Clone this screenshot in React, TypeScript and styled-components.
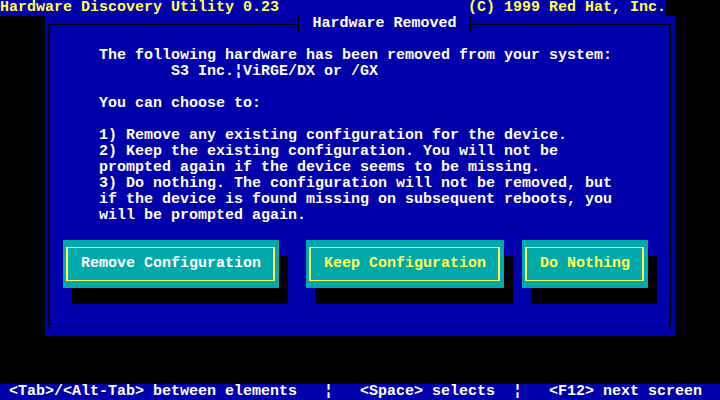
import React from "react";
import styled, { createGlobalStyle } from "styled-components";

const BLUE = "#0000aa";
const CYAN = "#00aaaa";
const YELLOW = "#ffff55";
const WHITE = "#ffffff";
const CELL = 9;

const Global = createGlobalStyle`
html, body {
    margin: 0;
    padding: 0;
    background: #000;
    overflow: hidden;
}
body {
    font-family: "Liberation Mono", "DejaVu Sans Mono", monospace;
    font-weight: 700;
    font-size: 15px;
    line-height: 16px;
}
`;

const buttons = [
    { label: "Remove Configuration", color: WHITE, gap: 0 },
    { label: "Keep Configuration", color: YELLOW, gap: 27 },
    { label: "Do Nothing", color: YELLOW, gap: 18 },
];

const lines = [
    "1) Remove any existing configuration for the device.",
    "2) Keep the existing configuration. You will not be",
    "prompted again if the device seems to be missing.",
    "3) Do nothing. The configuration will not be removed, but",
    "if the device is found missing on subsequent reboots, you",
    "will be prompted again.",
];

const App = () => {
    return (
        <Screen>
            <Global />
            <TopBar>
                <span>Hardware Discovery Utility 0.23</span>
                <span>(C) 1999 Red Hat, Inc.</span>
            </TopBar>
            <Window>
                <Frame>
                    <Title>Hardware Removed</Title>
                    <Para>
                        The following hardware has been removed from your system:
                        {"\n"}
                        {"        S3 Inc.¦ViRGE/DX or /GX"}
                    </Para>
                    <Para>You can choose to:</Para>
                    <Para>{lines.join("\n")}</Para>
                    <ButtonRow>
                        {buttons.map((b) => (
                            <Button key={b.label} $cols={b.label.length + 4} $gap={b.gap}>
                                <ButtonFrame>
                                    <ButtonLabel $color={b.color}>{b.label}</ButtonLabel>
                                </ButtonFrame>
                            </Button>
                        ))}
                    </ButtonRow>
                </Frame>
            </Window>
            <Filler />
            <HelpBar>
                {" <Tab>/<Alt-Tab> between elements   ¦   <Space> selects  ¦   <F12> next screen"}
            </HelpBar>
        </Screen>
    );
};

export default App;

const Screen = styled.div`
width: 720px;
height: 400px;
display: flex;
flex-direction: column;
background: #000;
`;

const TopBar = styled.div`
width: ${74 * CELL}px;
height: 16px;
display: flex;
justify-content: space-between;
background: ${BLUE};
color: ${YELLOW};
white-space: pre;
`;

const Window = styled.div`
margin-left: ${5 * CELL}px;
width: ${70 * CELL}px;
height: 320px;
box-sizing: border-box;
padding: 0 4px 8px 3px;
background: ${BLUE};
display: flex;
`;

const Frame = styled.fieldset`
flex: 1;
margin: 0;
min-width: 0;
box-sizing: border-box;
border-style: solid;
border-color: #000;
border-width: 1px 2px;
padding: 16px 0 0 49px;
color: ${WHITE};
`;

const Title = styled.legend`
margin: 0 auto;
padding: 0 12px 0 13px;
height: 16px;
line-height: 16px;
border-left: 2px solid #000;
border-right: 2px solid #000;
color: ${WHITE};
white-space: pre;
`;

const Para = styled.div`
margin: 0 0 16px;
white-space: pre;
`;

const ButtonRow = styled.div`
display: flex;
margin-left: -36px;
`;

const Button = styled.div<{ $cols: number; $gap: number }>`
width: ${(p) => p.$cols * CELL}px;
height: 48px;
margin-left: ${(p) => p.$gap}px;
box-sizing: border-box;
padding: 7px 4px 7px 3px;
background: ${CYAN};
box-shadow: ${CELL}px 16px 0 #000;
display: flex;
`;

const ButtonFrame = styled.div`
flex: 1;
box-sizing: border-box;
border-style: solid;
border-color: ${YELLOW};
border-width: 1px 2px;
padding: 7px 12px 7px 13px;
display: flex;
align-items: center;
`;

const ButtonLabel = styled.span<{ $color: string }>`
color: ${(p) => p.$color};
white-space: pre;
`;

const Filler = styled.div`
flex: 1;
`;

const HelpBar = styled.div`
height: 16px;
background: ${BLUE};
color: ${WHITE};
white-space: pre;
`;
